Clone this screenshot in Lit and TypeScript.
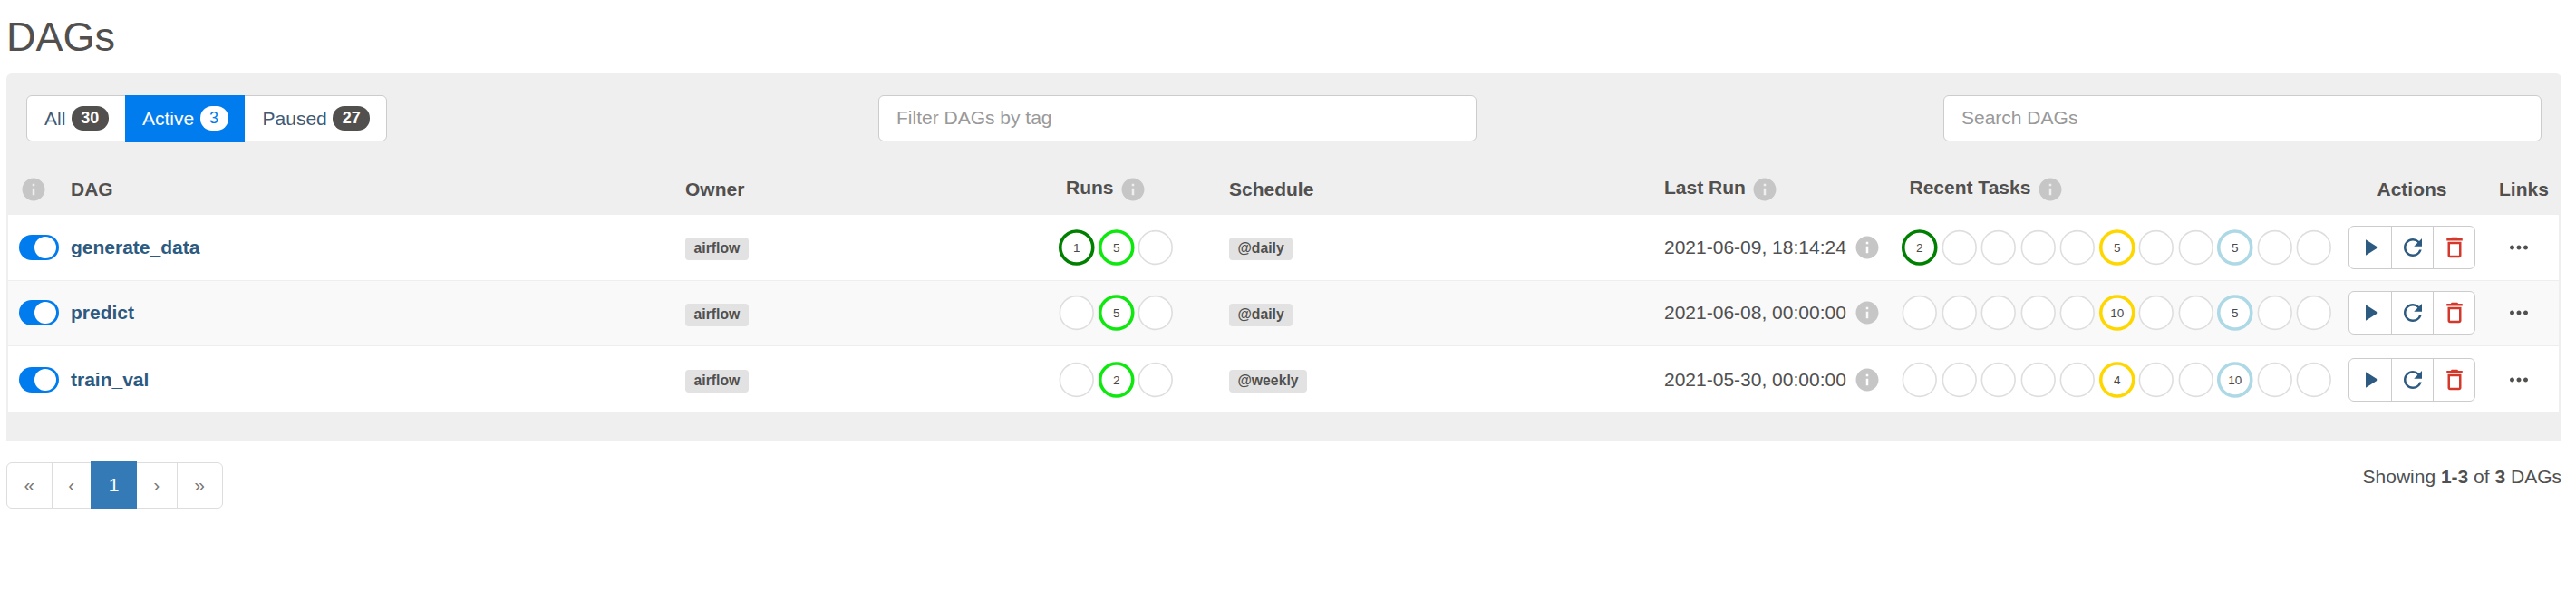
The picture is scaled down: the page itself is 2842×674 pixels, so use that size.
import { LitElement, css, html, svg } from 'lit';
import { customElement } from 'lit/decorators.js';

const ICONS = {
  info: 'M12 2C6.48 2 2 6.48 2 12s4.48 10 10 10 10-4.48 10-10S17.52 2 12 2zm1 15h-2v-6h2v6zm0-8h-2V7h2v2z',
  play: 'M8 5v14l11-7z',
  refresh:
    'M17.65 6.35A7.958 7.958 0 0012 4c-4.42 0-7.99 3.58-7.99 8s3.57 8 7.99 8c3.73 0 6.84-2.55 7.73-6h-2.08A5.99 5.99 0 0112 18c-3.31 0-6-2.69-6-6s2.69-6 6-6c1.66 0 3.14.69 4.22 1.78L13 11h7V4l-2.35 2.35z',
  trash:
    'M6 19c0 1.1.9 2 2 2h8c1.1 0 2-.9 2-2V7H6v12zM8 9h8v10H8V9zm7.5-5l-1-1h-5l-1 1H5v2h14V4h-3.5z',
  more: 'M6 10c-1.1 0-2 .9-2 2s.9 2 2 2 2-.9 2-2-.9-2-2-2zm12 0c-1.1 0-2 .9-2 2s.9 2 2 2 2-.9 2-2-.9-2-2-2zm-6 0c-1.1 0-2 .9-2 2s.9 2 2 2 2-.9 2-2-.9-2-2-2z',
};

const STATE_COLORS: Record<string, string> = {
  success: '#008000',
  running: '#0fe80f',
  retry: '#ffd700',
  scheduled: '#add8e6',
};

const RUN_STATES = ['success', 'running', ''];
const TASK_STATES = ['success', '', '', '', '', 'retry', '', '', 'scheduled', '', ''];

const DAGS = [
  {
    name: 'generate_data',
    schedule: '@daily',
    lastRun: '2021-06-09, 18:14:24',
    runs: [1, 5, 0],
    tasks: [2, 0, 0, 0, 0, 5, 0, 0, 5, 0, 0],
  },
  {
    name: 'predict',
    schedule: '@daily',
    lastRun: '2021-06-08, 00:00:00',
    runs: [0, 5, 0],
    tasks: [0, 0, 0, 0, 0, 10, 0, 0, 5, 0, 0],
  },
  {
    name: 'train_val',
    schedule: '@weekly',
    lastRun: '2021-05-30, 00:00:00',
    runs: [0, 2, 0],
    tasks: [0, 0, 0, 0, 0, 4, 0, 0, 10, 0, 0],
  },
];

@customElement('app-root')
export class AppRoot extends LitElement {
  static styles = css`
    :host {
      display: block;
      padding: 0 16px 0 7px;
      background: #fff;
      color: #51504f;
      font-family: 'Liberation Sans', Arial, sans-serif;
      font-size: 21px;
    }

    h2 {
      margin: 0;
      padding: 16px 0;
      font-size: 45px;
      font-weight: 400;
      line-height: 49px;
    }

    .panel {
      padding: 24px 3px 31px 2px;
      background: #efefef;
      border-radius: 6px 6px 0 0;
    }

    .filters {
      display: grid;
      grid-template-columns: 940px 660px 1fr;
      margin: 0 19px 0 20px;
    }

    .tabs {
      display: flex;
      justify-self: start;
      height: 51px;
      box-sizing: border-box;
      background: #fff;
      border: 1.5px solid #ccc;
      border-radius: 6px;
    }

    .tab {
      display: flex;
      align-items: center;
      gap: 6.5px;
      padding: 0 18px 0 19px;
      color: #3f5b78;
    }

    .tab.active {
      margin: -1.5px 0;
      background: #017cee;
      color: #fff;
    }

    .tab:last-child {
      padding-left: 20px;
    }

    .badge {
      height: 27px;
      min-width: 20px;
      padding: 0 10.5px;
      box-sizing: border-box;
      background: #51504f;
      border-radius: 13px;
      color: #fff;
      font-size: 18px;
      font-weight: 700;
      line-height: 26px;
      text-align: center;
    }

    .tab.active .badge {
      background: #fff;
      color: #017cee;
      font-weight: 400;
    }

    .field {
      height: 51px;
      box-sizing: border-box;
      padding: 0 19px;
      background: #fff;
      border: 1.5px solid #ccc;
      border-radius: 6px;
      color: #999;
      line-height: 48px;
    }

    .field.search {
      width: 660px;
      justify-self: end;
    }

    .row {
      display: grid;
      grid-template-columns: 69px 678px 408px 192px 480px 260px 495px 154px 78px;
      align-items: center;
    }

    .head {
      height: 81px;
      padding-top: 24px;
      box-sizing: border-box;
      font-weight: 700;
    }

    .head > div {
      display: flex;
      align-items: center;
      gap: 9px;
    }

    .head .pad-left {
      padding-left: 12px;
    }

    .head .tasks-head {
      padding-left: 10.5px;
    }

    .head .centered {
      justify-content: center;
      padding-right: 14px;
    }

    .head .raised span {
      margin-top: -4px;
    }

    .head .first {
      padding-left: 15px;
    }

    .body {
      height: 72.67px;
      box-sizing: border-box;
      background: #fff;
      border-bottom: 1.5px solid #eee;
    }

    .body:nth-child(even) {
      background: #f9f9f9;
    }

    .body:last-child {
      border-bottom: 0;
    }

    .info {
      display: block;
      flex: none;
      width: 30px;
      height: 30px;
      margin: -2.5px;
      fill: #c6c6c6;
    }

    .toggle {
      display: flex;
      justify-content: flex-end;
      align-items: center;
      width: 44px;
      height: 28px;
      margin-left: 12px;
      padding-right: 3px;
      box-sizing: border-box;
      background: #017cee;
      border-radius: 14px;
    }

    .toggle i {
      width: 24px;
      height: 24px;
      background: #fff;
      border-radius: 50%;
    }

    .name {
      color: #2d5a80;
      font-weight: 700;
    }

    .tag {
      justify-self: start;
      height: 25px;
      margin-top: 4px;
      padding: 0 9.5px;
      background: #e2e2e2;
      border-radius: 4px;
      font-size: 15.75px;
      font-weight: 700;
      line-height: 24px;
    }

    .dots {
      display: flex;
    }

    .dots.runs {
      padding-left: 2px;
    }

    .dots svg {
      display: block;
      flex: none;
    }

    .dots text {
      fill: #4a4a4a;
      font-size: 13.5px;
      text-anchor: middle;
    }

    .last-run {
      display: flex;
      align-items: center;
      gap: 11px;
    }

    .actions {
      display: flex;
      justify-self: start;
      height: 48px;
      box-sizing: border-box;
      border: 1.5px solid #ccc;
      border-radius: 6px;
      background: #fff;
    }

    .actions div {
      display: flex;
      align-items: center;
      justify-content: center;
      width: 46px;
      box-sizing: border-box;
      fill: #2d5a80;
    }

    .actions div + div {
      border-left: 1.5px solid #ccc;
    }

    .actions .trash {
      fill: #d4382b;
    }

    .actions svg,
    .more {
      display: block;
      width: 30px;
      height: 30px;
    }

    .more {
      margin-left: 19px;
      fill: #51504f;
    }

    .footer {
      display: flex;
      justify-content: space-between;
      margin-top: 24px;
    }

    .pager {
      display: flex;
      height: 51px;
      box-sizing: border-box;
      border: 1.5px solid #ddd;
      border-radius: 6px;
      color: #777;
    }

    .pager div {
      display: flex;
      align-items: center;
      justify-content: center;
      width: 43.5px;
      box-sizing: border-box;
    }

    .pager div:first-child {
      width: 48.5px;
    }

    .pager div:last-child {
      width: 50px;
    }

    .pager div:nth-child(2),
    .pager div:last-child {
      border-left: 1.5px solid #ddd;
    }

    .pager .current {
      width: 51px;
      margin: -1.5px 0;
      background: #337ab7;
      color: #fff;
    }

    .count {
      margin-top: 4px;
    }
  `;

  private icon(path: string, cls = '') {
    return html`<svg class=${cls} viewBox="0 0 24 24">${svg`<path d=${path}></path>`}</svg>`;
  }

  private dots(values: number[], states: string[], cls: string) {
    return html`<div class="dots ${cls}">
      ${values.map((value, i) => {
        const color = value ? STATE_COLORS[states[i]] : '#dedede';
        return html`<svg width="43.5" height="44" viewBox="0 0 43.5 44">
          ${svg`<circle cx="21.75" cy="22" r=${value ? 18 : 18.4} fill="#fff" stroke=${color}
            stroke-width=${value ? 3.6 : 1.6}></circle>`}
          ${value ? svg`<text x="21.75" y="26.8">${value}</text>` : ''}
        </svg>`;
      })}
    </div>`;
  }

  render() {
    return html`
      <h2>DAGs</h2>
      <div class="panel">
        <div class="filters">
          <div class="tabs">
            <div class="tab">All <span class="badge">30</span></div>
            <div class="tab active">Active <span class="badge">3</span></div>
            <div class="tab">Paused <span class="badge">27</span></div>
          </div>
          <div class="field">Filter DAGs by tag</div>
          <div class="field search">Search DAGs</div>
        </div>
        <div class="row head">
          <div class="first">${this.icon(ICONS.info, 'info')}</div>
          <div>DAG</div>
          <div>Owner</div>
          <div class="pad-left raised"><span>Runs</span>${this.icon(ICONS.info, 'info')}</div>
          <div>Schedule</div>
          <div class="raised"><span>Last Run</span>${this.icon(ICONS.info, 'info')}</div>
          <div class="tasks-head raised"><span>Recent Tasks</span>${this.icon(ICONS.info, 'info')}</div>
          <div class="centered">Actions</div>
          <div class="pad-left">Links</div>
        </div>
        <div>
          ${DAGS.map(
            (dag) => html`<div class="row body">
              <div class="toggle"><i></i></div>
              <div class="name">${dag.name}</div>
              <div class="tag">airflow</div>
              ${this.dots(dag.runs, RUN_STATES, 'runs')}
              <div class="tag">${dag.schedule}</div>
              <div class="last-run">${dag.lastRun} ${this.icon(ICONS.info, 'info')}</div>
              ${this.dots(dag.tasks, TASK_STATES, 'tasks')}
              <div class="actions">
                <div>${this.icon(ICONS.play)}</div>
                <div>${this.icon(ICONS.refresh)}</div>
                <div class="trash">${this.icon(ICONS.trash)}</div>
              </div>
              ${this.icon(ICONS.more, 'more')}
            </div>`,
          )}
        </div>
      </div>
      <div class="footer">
        <div class="pager">
          <div>«</div>
          <div>‹</div>
          <div class="current">1</div>
          <div>›</div>
          <div>»</div>
        </div>
        <div class="count">Showing <b>1-3</b> of <b>3</b> DAGs</div>
      </div>
    `;
  }
}
